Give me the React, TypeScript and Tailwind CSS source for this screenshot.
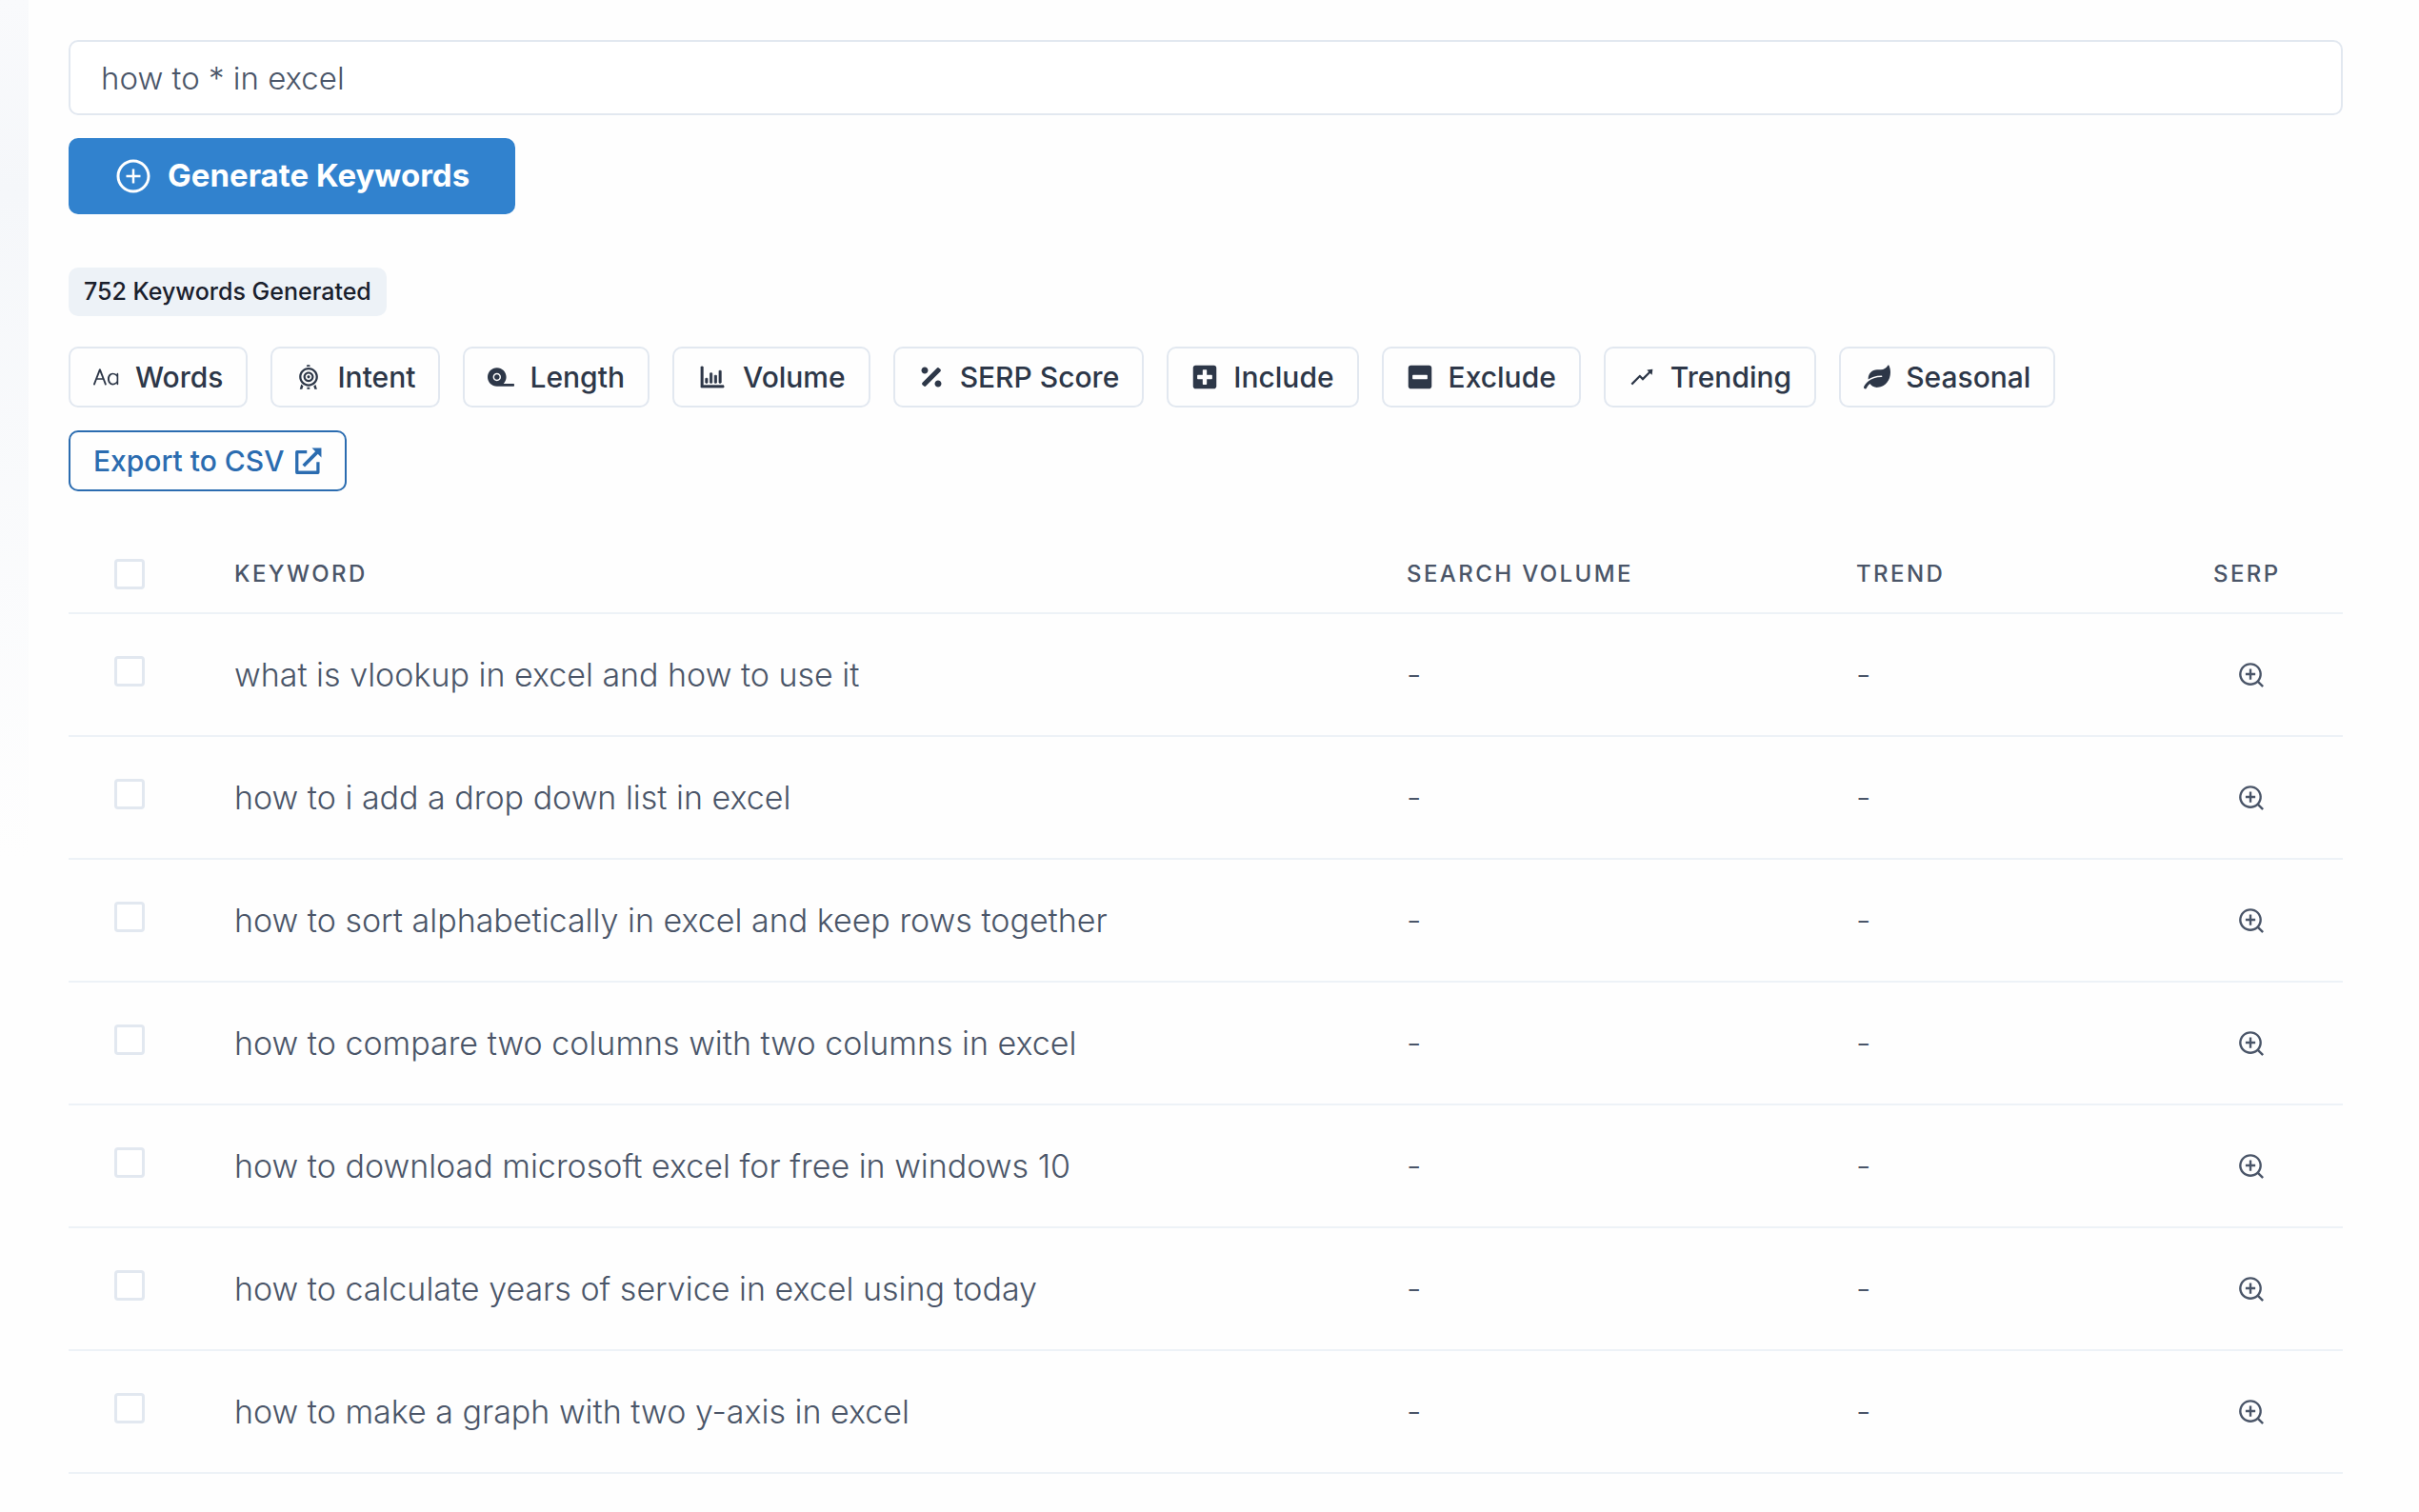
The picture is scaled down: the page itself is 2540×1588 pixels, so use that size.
import React from 'react';
import { AiOutlineBarChart, AiOutlinePlusCircle, AiOutlineRise, AiOutlineZoomIn } from 'react-icons/ai';
import { FaLeaf, FaMinusSquare, FaPercentage, FaPlusSquare, FaTape } from 'react-icons/fa';
import { GiArcheryTarget } from 'react-icons/gi';
import { RxLetterCaseCapitalize } from 'react-icons/rx';

const filters = [
    { label: 'Words', icon: <RxLetterCaseCapitalize className="size-7" /> },
    { label: 'Intent', icon: <GiArcheryTarget className="size-7" /> },
    { label: 'Length', icon: <FaTape className="size-7" /> },
    { label: 'Volume', icon: <AiOutlineBarChart className="size-8" stroke="currentColor" strokeWidth="24" /> },
    { label: 'SERP Score', icon: <FaPercentage className="size-7" /> },
    { label: 'Include', icon: <FaPlusSquare className="size-7" /> },
    { label: 'Exclude', icon: <FaMinusSquare className="size-7" /> },
    { label: 'Trending', icon: <AiOutlineRise className="size-7" /> },
    { label: 'Seasonal', icon: <FaLeaf className="size-7" /> },
];

const keywords = [
    'what is vlookup in excel and how to use it',
    'how to i add a drop down list in excel',
    'how to sort alphabetically in excel and keep rows together',
    'how to compare two columns with two columns in excel',
    'how to download microsoft excel for free in windows 10',
    'how to calculate years of service in excel using today',
    'how to make a graph with two y-axis in excel',
];

const ExternalLink = () => (
    <svg viewBox="0 0 24 24" className="size-7" fill="none" stroke="currentColor" strokeWidth="2.8" strokeLinejoin="round">
        <path d="M10.500 4H1.500v18.500h19V13" />
        <path d="M7.500 16.500 20 4" strokeWidth="3.2" />
        <path d="M15 .500H23.500V9z" fill="currentColor" stroke="none" />
    </svg>
);

const Checkbox = ({ label }: { label: string }) => (
    <input
        type="checkbox"
        aria-label={label}
        className="block size-8 appearance-none rounded-sm border-3 border-[#e2e8f0] bg-white checked:bg-[#3182ce]"
    />
);

const App = () => {
    return (
        <div className="min-h-screen bg-linear-to-b from-[#f9fafc] via-[#f5f7fa] via-[200px] to-[#fefefe] to-[900px] pl-[30px] font-['Inter',sans-serif] text-[#2d3748]">
            <main className="min-h-screen bg-[#fefefe] pt-[42px] pr-20 pl-[42px]">
                <form className="flex flex-col items-start gap-6" onSubmit={(e) => e.preventDefault()}>
                    <input
                        type="text"
                        aria-label="Keyword pattern"
                        defaultValue="how to * in excel"
                        className="h-[79px] w-full rounded-[10px] border-2 border-[#e2e8f0] bg-white px-8 text-[33px] font-light text-[#4a5568] outline-none"
                    />
                    <button type="submit" className="flex h-20 items-center gap-4 rounded-[10px] bg-[#3182ce] px-12 text-[33px] font-bold text-white">
                        <AiOutlinePlusCircle className="size-10" />
                        Generate Keywords
                    </button>
                </form>

                <p className="mt-14 flex h-[51px] w-fit items-center rounded-[10px] bg-[#edf2f7] px-4 text-[25px] font-medium text-[#1a202c]">
                    752 Keywords Generated
                </p>

                <div className="mt-8 flex flex-wrap gap-6">
                    {filters.map((filter) => (
                        <button key={filter.label} className="flex h-16 items-center gap-4 rounded-[10px] border-2 border-[#e2e8f0] px-6 text-[30px] font-medium">
                            {filter.icon}
                            {filter.label}
                        </button>
                    ))}
                </div>
                <button className="mt-6 flex h-16 items-center gap-3 rounded-[10px] border-2 border-[#2b6cb0] px-6 text-[30px] font-medium text-[#2b6cb0]">
                    Export to CSV
                    <ExternalLink />
                </button>

                <table className="mt-[46px] w-full table-fixed text-left">
                    <thead>
                        <tr className="h-[82px] border-b-2 border-[#edf2f7] text-[24px] tracking-widest text-[#4a5568] uppercase">
                            <th className="w-[126px] pl-12">
                                <Checkbox label="Select all keywords" />
                            </th>
                            <th className="pl-12 font-medium">Keyword</th>
                            <th className="w-[472px] pl-12 font-medium">Search Volume</th>
                            <th className="w-[375px] pl-12 font-medium">Trend</th>
                            <th className="w-[184px] pl-12 font-medium">SERP</th>
                        </tr>
                    </thead>
                    <tbody>
                        {keywords.map((keyword) => (
                            <tr key={keyword} className="h-[129px] border-b-2 border-[#edf2f7] text-[34px] font-light text-[#4a5568]">
                                <td className="pb-2 pl-12">
                                    <Checkbox label={keyword} />
                                </td>
                                <td className="pl-12">{keyword}</td>
                                <td className="pl-12">-</td>
                                <td className="pl-12">-</td>
                                <td className="pl-[72px]">
                                    <button aria-label={`View results for ${keyword}`} className="block">
                                        <AiOutlineZoomIn className="size-8" />
                                    </button>
                                </td>
                            </tr>
                        ))}
                    </tbody>
                </table>
            </main>
        </div>
    );
};

export default App;
